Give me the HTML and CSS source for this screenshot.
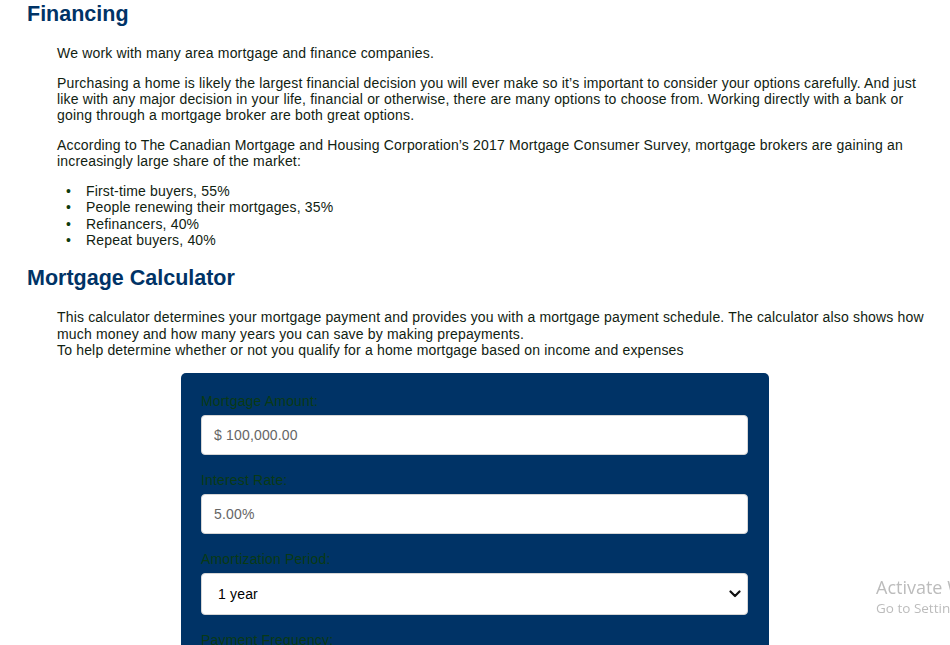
FILE: index.html
```html
<!DOCTYPE html>
<html lang="en">
<head>
<meta charset="utf-8">
<title>Financing</title>
<link rel="stylesheet" href="styles.css">
</head>
<body>
<main class="page">
  <section class="section">
    <h2 class="title">Financing</h2>
    <div class="body">
      <p>We work with many area mortgage and finance companies.</p>
      <p>Purchasing a home is likely the largest financial decision you will ever make so it’s important to consider your options carefully. And just like with any major decision in your life, financial or otherwise, there are many options to choose from. Working directly with a bank or going through a mortgage broker are both great options.</p>
      <p>According to The Canadian Mortgage and Housing Corporation’s 2017 Mortgage Consumer Survey, mortgage brokers are gaining an increasingly large share of the market:</p>
      <ul class="list">
        <li>First-time buyers, 55%</li>
        <li>People renewing their mortgages, 35%</li>
        <li>Refinancers, 40%</li>
        <li>Repeat buyers, 40%</li>
      </ul>
    </div>
  </section>
  <section class="section">
    <h2 class="title title-second">Mortgage Calculator</h2>
    <div class="body">
      <p class="intro">This calculator determines your mortgage payment and provides you with a mortgage payment schedule. The calculator also shows how much money and how many years you can save by making prepayments.<br>To help determine whether or not you qualify for a home mortgage based on income and expenses</p>
    </div>
    <form class="calc">
      <div class="field">
        <label class="label">Mortgage Amount:</label>
        <input class="input" type="text" value="$ 100,000.00">
      </div>
      <div class="field">
        <label class="label">Interest Rate:</label>
        <input class="input" type="text" value="5.00%">
      </div>
      <div class="field">
        <label class="label">Amortization Period:</label>
        <div class="select-wrap">
          <select class="select">
            <option>1 year</option>
            <option>2 years</option>
            <option>5 years</option>
          </select>
          <svg class="chev" width="12" height="8" viewBox="0 0 12 8"><path d="M1.5 1.5 L6 6 L10.5 1.5" fill="none" stroke="#111" stroke-width="2.2" stroke-linecap="round" stroke-linejoin="round"/></svg>
        </div>
      </div>
      <div class="field">
        <label class="label">Payment Frequency:</label>
        <div class="select-wrap">
          <select class="select">
            <option>Monthly</option>
          </select>
          <svg class="chev" width="12" height="8" viewBox="0 0 12 8"><path d="M1.5 1.5 L6 6 L10.5 1.5" fill="none" stroke="#111" stroke-width="2.2" stroke-linecap="round" stroke-linejoin="round"/></svg>
        </div>
      </div>
    </form>
  </section>
</main>
<div class="watermark">
  <div class="wm-title">Activate Windows</div>
  <div class="wm-sub">Go to Settings to activate Windows.</div>
</div>
</body>
</html>
```

FILE: styles.css
```css
html, body {
  margin: 0;
  padding: 0;
  background: #ffffff;
}
body {
  font-family: "Liberation Sans", Arial, sans-serif;
  font-size: 14px;
  line-height: 16px;
  color: #112211;
  overflow-x: hidden;
}
.page {
  padding: 2px 18px 0 27px;
}
.title {
  margin: 0;
  font-size: 21.5px;
  line-height: 25px;
  font-weight: bold;
  color: #003366;
}
.title-second {
  margin-top: 18px;
}
.body {
  padding-left: 30px;
  letter-spacing: 0.17px;
}
.body p {
  margin: 18px 0 14px;
}
.body p + p {
  margin-top: 14px;
}
.list {
  margin: 13px 0 0;
  padding-left: 0;
  list-style: none;
}
.list li {
  line-height: 16.3px;
  display: flex;
}
.list li::before {
  content: "•";
  color: #0d3b0d;
  flex: 0 0 20px;
  margin-left: 9px;
}
.intro {
  line-height: 16.5px;
}
.body .intro {
  margin: 18px 0 14px;
}
.calc {
  box-sizing: border-box;
  width: 588px;
  margin: 0 auto 0 154px;
  background: #003366;
  border-radius: 5px;
  padding: 20px 21px 40px 20px;
}
.field {
  display: flex;
  flex-direction: column;
  gap: 6px;
  margin-bottom: 17px;
}
.label {
  color: #0a3a14;
  font-size: 14px;
  line-height: 16px;
  letter-spacing: 0.17px;
}
.input {
  box-sizing: border-box;
  height: 40px;
  width: 100%;
  border: 1px solid #d6d6d6;
  border-radius: 4px;
  padding: 0 12px;
  font-family: "Liberation Sans", Arial, sans-serif;
  font-size: 14px;
  letter-spacing: 0.17px;
  color: #666666;
  background: #ffffff;
  outline: none;
}
.select-wrap {
  position: relative;
}
.select {
  box-sizing: border-box;
  display: block;
  width: 100%;
  height: 42px;
  border: 1px solid #d6d6d6;
  border-radius: 4px;
  padding: 0 16px;
  font-family: "Liberation Sans", Arial, sans-serif;
  font-size: 14px;
  letter-spacing: 0.17px;
  color: #000000;
  background: #ffffff;
  -webkit-appearance: none;
  appearance: none;
  outline: none;
}
.chev {
  position: absolute;
  right: 7px;
  top: 17px;
  pointer-events: none;
}
.watermark {
  position: fixed;
  left: 876px;
  top: 575px;
  white-space: nowrap;
  font-family: "Open Sans", "Noto Sans", sans-serif;
  color: #bcbcbc;
  pointer-events: none;
}
.wm-title {
  font-size: 18px;
  line-height: 24px;
}
.wm-sub {
  font-size: 13.5px;
  line-height: 18px;
}
```
